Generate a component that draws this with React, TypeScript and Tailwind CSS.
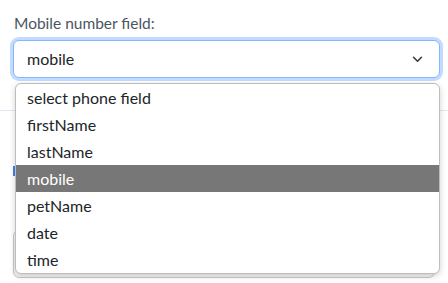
import React from "react";

const options = ["select phone field", "firstName", "lastName", "mobile", "petName", "date", "time"];

export default function App() {
  return (
    <div className="relative w-[448px] h-[283px] overflow-hidden bg-white" style={{ fontFamily: "Lato, 'Open Sans', sans-serif" }}>
      <div className="flex flex-col">
        <div className="flex flex-col px-[13px] pt-[12px]">
          <div className="text-[15.5px] leading-[22px] text-[#4b5563] pl-[1px]">Mobile number field:</div>
          <div className="mt-[6px] h-[38px] w-[427px] rounded-[6px] border border-[#86b7fe] bg-white shadow-[0_0_0_3px_rgba(13,110,253,0.25)] flex items-center justify-between pl-[13px] pr-[16px]">
            <span className="text-[16px] text-[#212529]">mobile</span>
            <svg width="11" height="7" viewBox="0 0 12 8" fill="none">
              <path d="M1.5 1.5l4.5 4.5 4.5-4.5" stroke="#343a40" strokeWidth="1.8" strokeLinecap="round" strokeLinejoin="round" />
            </svg>
          </div>
        </div>
        {/* content behind the open list */}
        <div className="mt-[32px] h-px w-full bg-[#dfe6f3]" />
        <div className="mt-[55px] ml-[13px] h-[10px] w-[3px] bg-[#3b82f6]" />
        <div className="mt-[54px] mx-[13px] h-[48px] rounded-[6px] border border-[#c8c8c8] bg-[#f4f4f4]" />
      </div>

      <div className="absolute left-[15px] top-[83px] w-[425px] rounded-[6px] border border-[#bdbdbd] bg-white shadow-[0_2px_6px_rgba(0,0,0,0.18)] overflow-hidden flex flex-col">
        {options.map((o) => (
          <div
            key={o}
            className={
              o === "mobile"
                ? "h-[27px] flex items-center pl-[11px] text-[16px] bg-[#777777] text-white"
                : "h-[27px] flex items-center pl-[11px] text-[16px] text-[#212529]"
            }
          >
            {o}
          </div>
        ))}
      </div>
    </div>
  );
}
